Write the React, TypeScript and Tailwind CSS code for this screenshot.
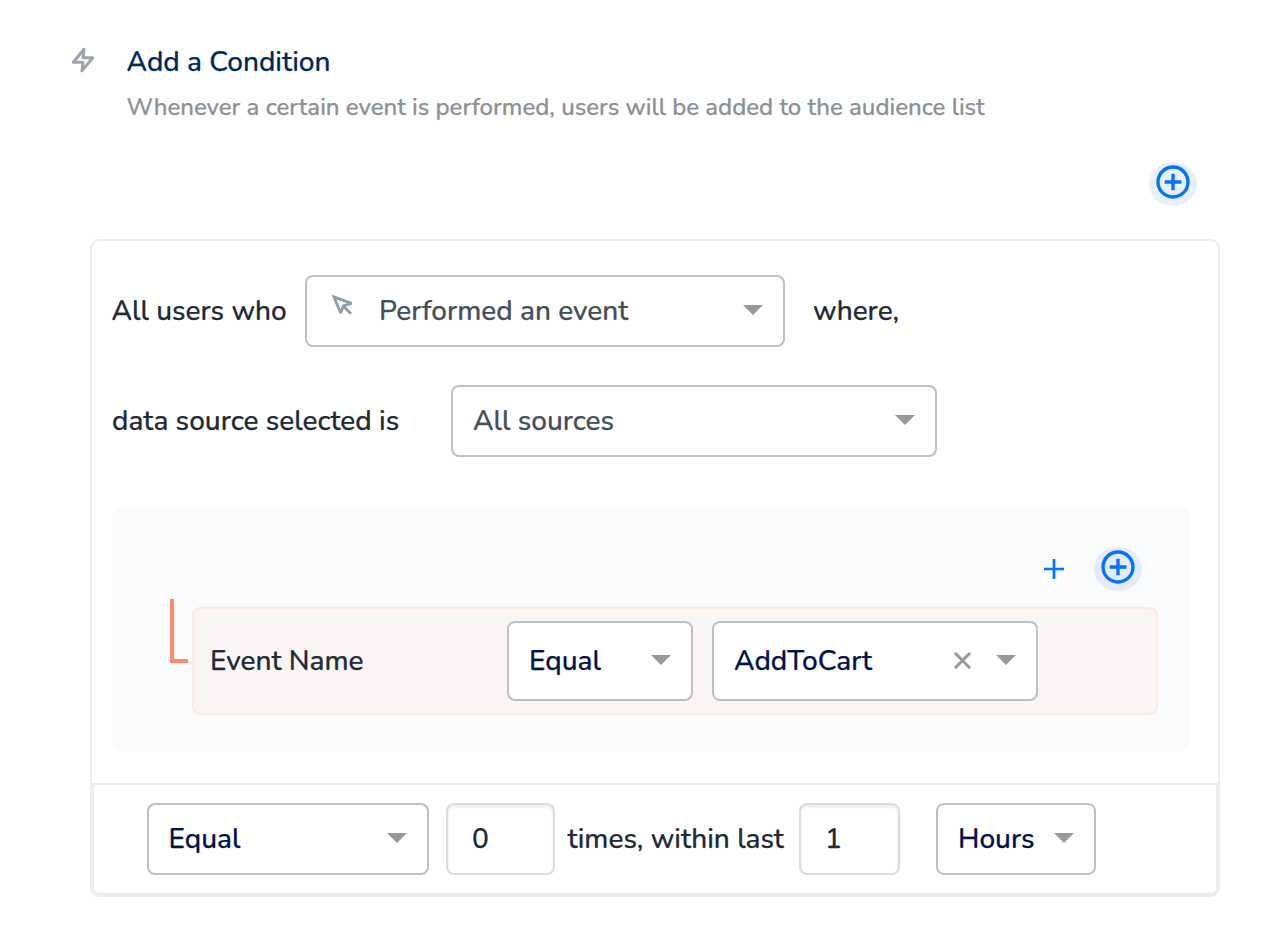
import type { ReactNode } from 'react';
import { MdAddCircleOutline } from 'react-icons/md';

function Caret() {
  return (
    <svg className="-mt-0.5 block h-[10px] w-5 shrink-0" viewBox="0 0 20 10">
      <path d="M0 0h20L10 10z" fill="#999999" />
    </svg>
  );
}

function Select({ className, children, clearable }: { className: string; children: ReactNode; clearable?: boolean }) {
  return (
    <div className={`flex shrink-0 items-center rounded-lg border-2 border-[#bfc0c5] bg-white pr-5 pl-5 ${className}`}>
      {children}
      <span className="grow" />
      {clearable && (
        <svg className="-mt-px mr-[25px] block h-[17px] w-[17px]" viewBox="0 0 17 17" fill="none" stroke="#999999" strokeWidth="3" strokeLinecap="round">
          <path d="M1.8 1.8l13.4 13.4M15.2 1.8L1.8 15.2" />
        </svg>
      )}
      <Caret />
    </div>
  );
}

function AddGroupButton({ className }: { className: string }) {
  return (
    <button className={`flex h-11 w-12 shrink-0 items-center justify-center rounded-[50%] ${className}`}>
      <MdAddCircleOutline className="-mt-1 size-10 shrink-0 text-[#0073ff]" />
    </button>
  );
}

function NumberBox({ className, children }: { className: string; children: ReactNode }) {
  return (
    <div className={`flex h-[72px] shrink-0 items-center rounded-lg border-2 border-[#d9dde1] bg-white pl-6 shadow-[inset_0_2px_3px_rgba(0,0,0,0.09)] ${className}`}>
      {children}
    </div>
  );
}

export default function App() {
  return (
    <main className="h-[934px] w-[1284px] overflow-hidden bg-white font-['Nunito','Lato',sans-serif] text-[28px] leading-[38px] font-medium whitespace-nowrap text-[#212b36] [-webkit-text-stroke:0.25px]">
      <header className="flex pt-[43px] pl-[70px]">
        <svg className="mt-1 mr-[30.5px] block size-[26px] shrink-0" viewBox="0 0 24 24" fill="none" stroke="#9aa4ad" strokeWidth="2.8" strokeLinejoin="round">
          <path d="M13 2L3 14h9l-1 8 10-12h-9z" />
        </svg>
        <div>
          <h1 className="text-[#00285f]">Add a Condition</h1>
          <p className="mt-2.5 text-2xl leading-[33px] tracking-[-0.01px] text-[#8c9096]">
            Whenever a certain event is performed, users will be added to the audience list
          </p>
        </div>
      </header>

      <div className="mt-[38px] flex justify-end pr-[87px]">
        <AddGroupButton className="bg-[#e8effd] pl-[0.6px]" />
      </div>

      <section className="mt-[33px] ml-[90px] flex h-[658px] w-[1130px] flex-col rounded-[9px] border-2 border-[#ebedef]">
        <div className="flex items-center pt-[34px] pl-[19.5px]">
          <span className="w-[193.5px]">All users who</span>
          <Select className="h-[72px] w-[480px]">
            <svg className="-mt-2.5 mr-[21px] ml-[3px] block size-7 shrink-0" viewBox="0 0 28 28" fill="none" stroke="#919ca4" strokeWidth="2.8">
              <path d="M4 5l6.7 16 2.6-7 8.2-2.6z" strokeLinejoin="miter" strokeMiterlimit="2.6" />
              <path d="M13.2 14l7.8 7.8" />
            </svg>
            <span className="text-[#454f5b]">Performed an event</span>
          </Select>
          <span className="ml-7">where,</span>
        </div>

        <div className="mt-[38px] flex items-center pl-5">
          <span className="w-[339px]">data source selected is</span>
          <Select className="h-[72px] w-[486px]">
            <span className="text-[#454f5b]">All sources</span>
          </Select>
        </div>

        <div className="mt-[50px] ml-5 h-[244px] w-[1078px] shrink-0 rounded-lg bg-[#fafbfd] pt-10">
          <div className="flex items-center justify-end pr-12">
            <svg className="mr-[30px] block size-5" viewBox="0 0 20 20" fill="none" stroke="#0073ff" strokeWidth="2.7">
              <path d="M10 0v20M0 10h20" />
            </svg>
            <AddGroupButton className="bg-[#e5ebfb]" />
          </div>
          <div className="mt-2 flex items-start pl-[58px]">
            <div className="mr-1 h-16 w-[18px] border-b-4 border-l-4 border-[#ff8c66]" />
            <div className="mt-2 flex h-[108px] w-[966px] items-center rounded-lg border-2 border-[#fce9e2] bg-[#f9f5f4] pl-4">
              <span className="w-[297px]">Event Name</span>
              <Select className="h-20 w-[186px] text-[#00134d]">Equal</Select>
              <Select className="ml-[19px] h-20 w-[326px] text-[#00134d]" clearable>AddToCart</Select>
            </div>
          </div>
        </div>

        <footer className="mt-8 flex h-28 shrink-0 items-center rounded-b-[7px] border-2 border-[#ebedef] pl-[53px]">
          <Select className="h-[72px] w-[282px] pl-[19.5px] text-[#00134d]">Equal</Select>
          <NumberBox className="ml-[17px] w-[109px]">0</NumberBox>
          <span className="ml-[12.5px] w-[231.5px]">times, within last</span>
          <NumberBox className="w-[101px]">1</NumberBox>
          <Select className="ml-9 h-[72px] w-40 text-[#00134d]">Hours</Select>
        </footer>
      </section>
    </main>
  );
}
